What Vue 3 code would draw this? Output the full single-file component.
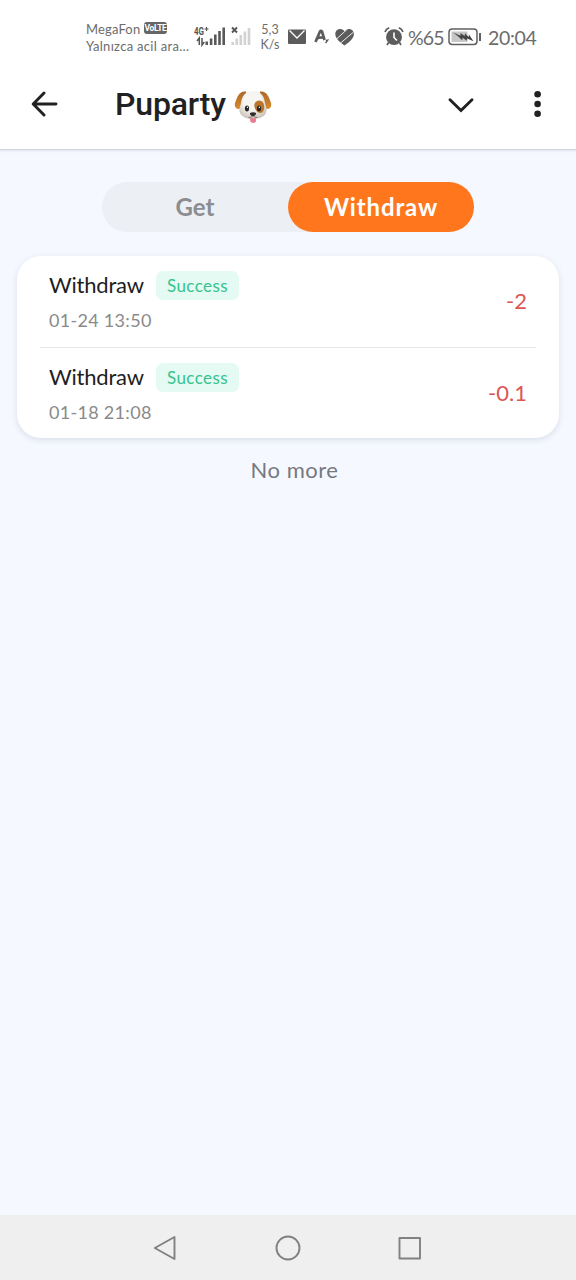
<script setup>
const records = [
  { title: 'Withdraw', status: 'Success', time: '01-24 13:50', amount: '-2' },
  { title: 'Withdraw', status: 'Success', time: '01-18 21:08', amount: '-0.1' }
]
</script>

<template>
  <div class="screen">
    <div class="status">
      <div class="carrier">
        <div class="line"><span class="mega">MegaFon</span><span class="volte">VoLTE</span></div>
        <div class="line sub">Yalnızca acil ara…</div>
      </div>
      <svg class="signals" width="60" height="24" viewBox="0 0 60 24">
        <text x="1" y="10.500" class="net" textLength="10" lengthAdjust="spacingAndGlyphs">4G</text>
        <path d="M11.500 5h4M13.500 3v4" stroke="#555" stroke-width="1.200" />
        <path d="M6.300 21v-7l-2.300 3M9 14v7l2.300-3" stroke="#555" stroke-width="1.500" fill="none" />
        <g fill="#595959">
          <rect x="12.500" y="17.500" width="2.500" height="3.500" /><rect x="16.800" y="14.500" width="2.600" height="6.500" />
          <rect x="21" y="10.500" width="2.600" height="10.500" /><rect x="25.200" y="7" width="2.600" height="14" />
          <rect x="29.400" y="3.500" width="2.600" height="17.500" />
        </g>
        <path d="m39 3.500 5 5m0-5-5 5" stroke="#555" stroke-width="1.900" />
        <g fill="#d2d2d2">
          <rect x="38.500" y="18" width="2.500" height="3" /><rect x="42.500" y="14.500" width="2.600" height="6.500" />
          <rect x="46.500" y="11" width="2.600" height="10" /><rect x="50.600" y="7.500" width="2.600" height="13.500" />
          <rect x="54.700" y="4" width="2.600" height="17" />
        </g>
      </svg>
      <div class="speed"><span>5,3</span><span>K/s</span></div>
      <svg class="notes" width="70" height="22" viewBox="0 0 70 22">
        <rect x="1" y="4.500" width="18" height="14.500" rx="1" fill="#5c5c5c" />
        <path d="m2.500 5.500 7.500 7.500 7.500-7.500" stroke="#fff" stroke-width="1.300" fill="none" />
        <path d="M28.500 17 33 6.500q1-1.500 2 0l2.500 8.500M29 14q3-2 8.500-1.500" stroke="#5c5c5c" stroke-width="2.700" fill="none" stroke-linejoin="round" />
        <path d="m38.800 15.500 1.800-.2-2 2.800" stroke="#5c5c5c" stroke-width="1.500" fill="none" />
        <path d="M57.500 20.500C53 17.500 48.300 13.500 48.300 9c0-5 6.200-7 9.200-2.800C60.500 2 66.900 4 66.900 9c0 4.500-4.900 8.500-9.400 11.500Z" fill="#5c5c5c" />
        <path d="M49 14.500 60.500 4M53 18.500 66 7.500" stroke="#fff" stroke-width=".9" />
      </svg>
      <svg class="alarm" width="20" height="20" viewBox="0 0 20 20">
        <circle cx="10" cy="10.200" r="7.900" fill="#5c5c5c" />
        <path d="M1 5q1-3 4.200-4.200M14.800.800Q18 2 19 5M4.500 15.500l-1.500 2.500M15.500 15.500l1.500 2.500" stroke="#5c5c5c" stroke-width="1.700" fill="none" />
        <path d="M10 5.500v5l3 3" stroke="#fff" stroke-width="1.600" fill="none" />
      </svg>
      <span class="percent">%65</span>
      <svg class="battery" width="34" height="18" viewBox="0 0 34 18">
        <rect x="1" y="1" width="28" height="15.500" rx="3.200" fill="none" stroke="#606060" stroke-width="1.500" />
        <rect x="3.500" y="3.500" width="16" height="10.500" fill="#c7c7c7" />
        <path d="m5 4.500 7.500 3.200 0-2.700 4.200 3 .3-2.700 3.500 3.700.5-2.500 4.500 6.700-6.500-2.700-.3 2.200-4-2.900-.5 2.400-4.200-4Z" fill="#454545" />
        <path d="M32 5v8" stroke="#606060" stroke-width="2" />
      </svg>
      <span class="clock">20:04</span>
    </div>

    <header class="header">
      <svg class="back" width="28" height="26" viewBox="0 0 28 26">
        <path d="M25 13H2.500M13 2 2.200 13 13 24" fill="none" stroke="#212121" stroke-width="2.900" stroke-linecap="round" stroke-linejoin="round" />
      </svg>
      <h1>Puparty</h1>
      <svg class="dog" width="38" height="34" viewBox="0 0 38 34">
        <defs>
          <radialGradient id="fur" cx=".48" cy=".35" r=".65">
            <stop offset=".5" stop-color="#f7f5f2" /><stop offset="1" stop-color="#cbc3ba" />
          </radialGradient>
          <linearGradient id="ear" x1="0" y1="0" x2="0" y2="1">
            <stop offset="0" stop-color="#a9682c" /><stop offset="1" stop-color="#d98b29" />
          </linearGradient>
        </defs>
        <path d="M12 1.500C5.500.500 3.500 6 1 13c-1.200 4.500 2.500 7 6 5.500L13 9Z" fill="url(#ear)" />
        <path d="M26 1.500c6.500-1 8.500 4.500 11 11.500 1.200 4.500-2.500 7-6 5.500L25 9Z" fill="url(#ear)" />
        <path d="M19 1c8 0 11 5 12 12 .4 3 2 4.500 1.500 8-.7 5.500-7 8-13.500 8S6.200 26.500 5.500 21C5 17.500 6.600 16 7 13 8 6 11 1 19 1Z" fill="url(#fur)" />
        <path d="M20.500 14c1-4 7-5 9-.800 1.500 4 .8 9.500-2.700 9.800-3.500.300-7.300-4.500-6.300-9Z" fill="#bb762c" />
        <ellipse cx="13" cy="18.500" rx="2.100" ry="3" fill="#292625" /><ellipse cx="25" cy="18.500" rx="2.100" ry="3" fill="#292625" />
        <circle cx="13.400" cy="17.200" r=".7" fill="#fff" /><circle cx="25.400" cy="17.200" r=".7" fill="#fff" />
        <path d="M16.300 27.500q2.700 1.500 5.400 0l.4 3c0 3.300-6 3.300-6 0Z" fill="#e87e91" />
        <path d="M14.500 27.500q3.500 0 4.500-2 1 2 4.500 2" fill="none" stroke="#6c5e57" stroke-width=".8" />
        <path d="M16 23q3-1.500 6 0c.5 1.600-1.500 3.200-3 3.400-1.500-.2-3.500-1.800-3-3.400Z" fill="#302c2b" />
      </svg>
      <svg class="chevron" width="28" height="16" viewBox="0 0 28 16">
        <path d="m3 2.700 11 10.800L25 2.700" fill="none" stroke="#212121" stroke-width="2.900" stroke-linecap="round" />
      </svg>
      <svg class="more" width="8" height="28" viewBox="0 0 8 28">
        <g fill="#212121"><circle cx="3.600" cy="4.300" r="3.300" /><circle cx="3.600" cy="14" r="3.300" /><circle cx="3.600" cy="23.700" r="3.300" /></g>
      </svg>
    </header>

    <main>
      <div class="tabs">
        <button class="tab"><span>Get</span></button>
        <button class="tab active"><span>Withdraw</span></button>
      </div>
      <section class="card">
        <article v-for="r in records" :key="r.time" class="row">
          <div>
            <div class="top"><span class="title">{{ r.title }}</span><span class="badge">{{ r.status }}</span></div>
            <div class="time">{{ r.time }}</div>
          </div>
          <span class="amount">{{ r.amount }}</span>
        </article>
      </section>
      <p class="end">No more</p>
    </main>

    <nav class="nav">
      <svg width="270" height="28" viewBox="0 0 270 28" fill="none" stroke="#818181" stroke-width="1.900" stroke-linejoin="round">
        <path d="M21.500 3v22L1.800 14Z" />
        <circle cx="135" cy="14" r="11.500" />
        <rect x="246.500" y="4" width="20.500" height="20.500" />
      </svg>
    </nav>
  </div>
</template>

<style>
body { margin: 0; background: #f5f8ff; }
</style>

<style scoped>
.screen { width: 576px; height: 1280px; display: flex; flex-direction: column; background: #f5f8ff; font-family: Lato, "Noto Sans", sans-serif; overflow: hidden; }
.status { height: 60px; box-sizing: border-box; padding-top: 20px; padding-left: 86px; background: #fff; display: flex; align-items: flex-start; color: #6c6c6c; white-space: nowrap; }
.carrier { width: 107px; flex: none; font-size: 13px; }
.line { height: 18px; line-height: 18px; display: flex; align-items: center; letter-spacing: .15px; }
.sub { letter-spacing: .3px; margin-top: -1px; }
.mega { width: 58px; line-height: 16px; margin-top: -1px; }
.volte { background: #666; color: #fff; width: 23px; height: 12px; border-radius: 3px; font: bold 8.500px/12px Roboto, sans-serif; letter-spacing: -.4px; text-align: center; margin-top: -2px; }
.signals { flex: none; margin-top: 4px; }
.net { font: bold 10px Roboto, sans-serif; fill: #555; }
.speed { width: 34px; flex: none; display: flex; flex-direction: column; align-items: center; font-size: 12.500px; line-height: 15px; margin-top: 2px; }
.notes { flex: none; margin-top: 5px; }
.alarm { flex: none; margin: 7px 0 0 27px; }
.percent { width: 40px; flex: none; margin-left: 4px; font-size: 19.500px; letter-spacing: -.8px; line-height: 35px; }
.battery { flex: none; margin-top: 8px; }
.clock { margin-left: 6px; font-size: 19.500px; letter-spacing: -.3px; line-height: 35px; }
.header { height: 89px; flex: none; background: #fff; border-bottom: 1px solid #d3d6dc; box-shadow: 0 1px 2px #dfe3ea; display: flex; align-items: center; z-index: 1; }
.header svg { flex: none; margin-bottom: 1px; }
.back { margin-left: 31px; }
h1 { width: 117px; margin: -2px 0 0 56px; font: 500 32px/40px Roboto, sans-serif; letter-spacing: -.15px; color: #212121; }
.header .dog { margin: 5px 0 0 2px; }
.header .chevron { margin-left: 175px; margin-bottom: 0; }
.header .more { margin-left: 59px; margin-bottom: 2px; }
main { flex: 1; }
.tabs { width: 372px; height: 50px; margin: 32px auto 0 102px; border-radius: 25px; background: #eceff4; display: flex; }
.tab { flex: 1; border: 0; padding: 0; background: none; border-radius: 25px; font: bold 24px/50px Lato, sans-serif; color: #8b8d90; }
.tab.active { background: #ff761c; color: #fff; letter-spacing: .85px; }
.card { width: 542px; height: 182px; margin: 24px 0 0 17px; background: #fff; border-radius: 24px; box-shadow: 0 2px 6px rgba(40, 55, 80, .13); box-sizing: border-box; padding: 0 23px; }
.row { height: 91px; box-sizing: border-box; padding: 14px 9px 0; display: flex; justify-content: space-between; }
.row + .row { border-top: 1px solid #e8e9eb; }
.top { display: flex; align-items: center; height: 30px; }
.title { width: 107px; font-size: 22px; line-height: 28px; letter-spacing: -.2px; margin-top: -1px; color: #1e1e1e; }
.badge { width: 83px; height: 29px; border-radius: 7px; background: #e5faf2; color: #35c38e; font-size: 17px; line-height: 30px; letter-spacing: .4px; text-align: center; }
.time { margin-top: 8px; font-size: 18px; line-height: 24px; letter-spacing: .3px; color: #8a8a8a; }
.amount { font-size: 22px; line-height: 62px; color: #dc5656; }
.end { margin: 18px 0 0 13px; text-align: center; font-size: 22px; line-height: 28px; letter-spacing: .5px; color: #75797f; }
.nav { height: 65px; flex: none; background: #efefef; display: flex; align-items: center; justify-content: center; }
</style>
